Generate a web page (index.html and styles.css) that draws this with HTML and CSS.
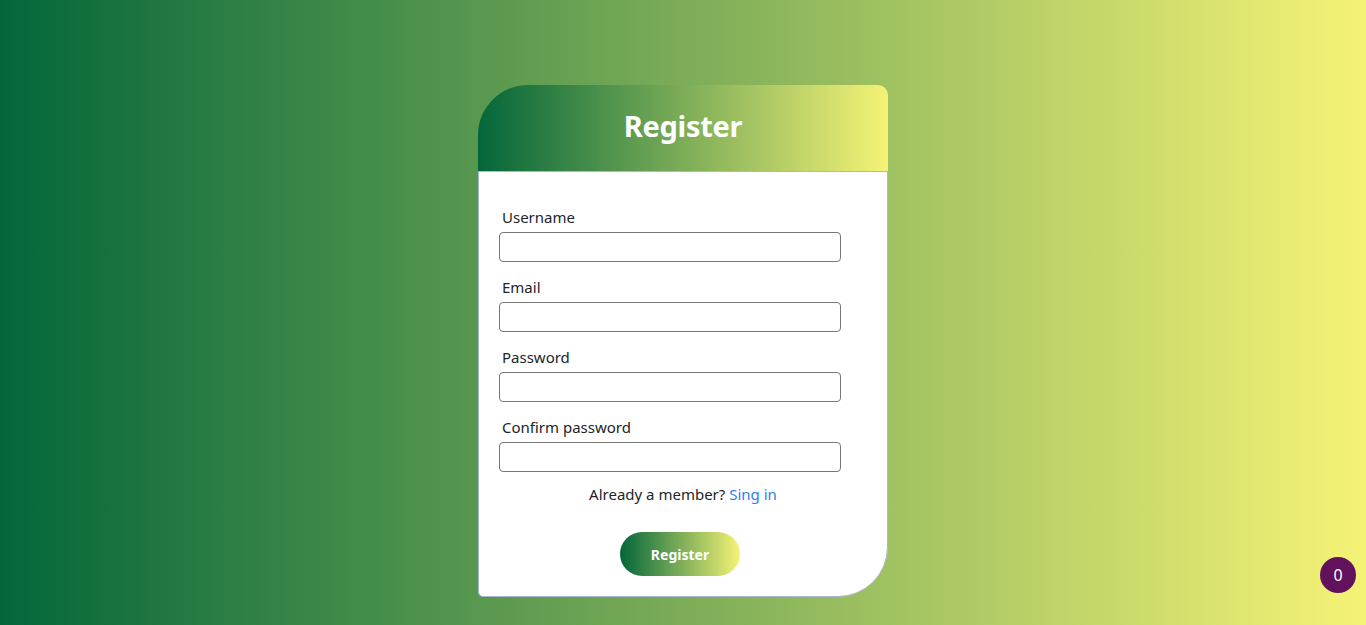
FILE: index.html
```html
<!DOCTYPE html>
<html lang="en">
<head>
<meta charset="utf-8">
<title>Register</title>
<link rel="stylesheet" href="styles.css">
</head>
<body>
<main class="page">
  <section class="card">
    <header class="card-head">
      <h1 class="title">Register</h1>
    </header>
    <form class="card-body">
      <div class="field">
        <label class="label" for="u">Username</label>
        <input class="input" id="u" type="text">
      </div>
      <div class="field">
        <label class="label" for="e">Email</label>
        <input class="input" id="e" type="email">
      </div>
      <div class="field">
        <label class="label" for="p">Password</label>
        <input class="input" id="p" type="password">
      </div>
      <div class="field">
        <label class="label" for="c">Confirm password</label>
        <input class="input" id="c" type="password">
      </div>
      <p class="member">Already a member? <a class="link" href="#">Sing in</a></p>
      <div class="actions">
        <button class="btn" type="button">Register</button>
      </div>
    </form>
  </section>
</main>
<div class="badge">0</div>
</body>
</html>
```
FILE: styles.css
```css
* { box-sizing: border-box; }
html, body { margin: 0; height: 100%; }
body {
  font-family: "Noto Sans", "Open Sans", sans-serif;
  color: #212529;
  background: linear-gradient(to right, #03663a, #f5f376);
  overflow: hidden;
}
.page {
  display: flex;
  justify-content: center;
  padding-top: 85px;
}
.card {
  width: 410px;
  display: flex;
  flex-direction: column;
}
.card-head {
  height: 86px;
  border-radius: 50px 10px 0 0;
  background: linear-gradient(to right, #03663a, #f5f376);
  display: flex;
  align-items: center;
  justify-content: center;
  padding-bottom: 5px;
}
.title {
  margin: 0;
  color: #fff;
  font-size: 29px;
  font-weight: 700;
  letter-spacing: -0.3px;
}
.card-body {
  background: #fff;
  border: 1px solid #a9b7d1;
  border-radius: 0 0 50px 5px;
  padding: 33px 20px 20px 20px;
  display: flex;
  flex-direction: column;
}
.field {
  display: flex;
  flex-direction: column;
  align-items: flex-start;
  margin-bottom: 13px;
}
.label {
  font-size: 15px;
  line-height: 24px;
  margin: 0 0 3px 3px;
}
.input {
  width: 342px;
  height: 30px;
  border: 1px solid #767676;
  border-radius: 4px;
  background: #fff;
  font: inherit;
}
.member {
  margin: -3px 0 0 0;
  text-align: center;
  font-size: 15px;
  line-height: 24px;
}
.link { color: #2f7cf6; text-decoration: none; }
.actions {
  display: flex;
  justify-content: center;
  margin-top: 26px;
  padding-right: 6px;
}
.btn {
  width: 120px;
  height: 44px;
  border: none;
  border-radius: 22px;
  background: linear-gradient(to right, #03663a, #f5f376);
  color: #fff;
  font-family: inherit;
  font-size: 14px;
  font-weight: 700;
}
.badge {
  position: fixed;
  right: 10px;
  bottom: 32px;
  width: 36px;
  height: 36px;
  border-radius: 50%;
  background: #62115c;
  color: #fff;
  display: flex;
  align-items: center;
  justify-content: center;
  font-size: 16px;
}
```
